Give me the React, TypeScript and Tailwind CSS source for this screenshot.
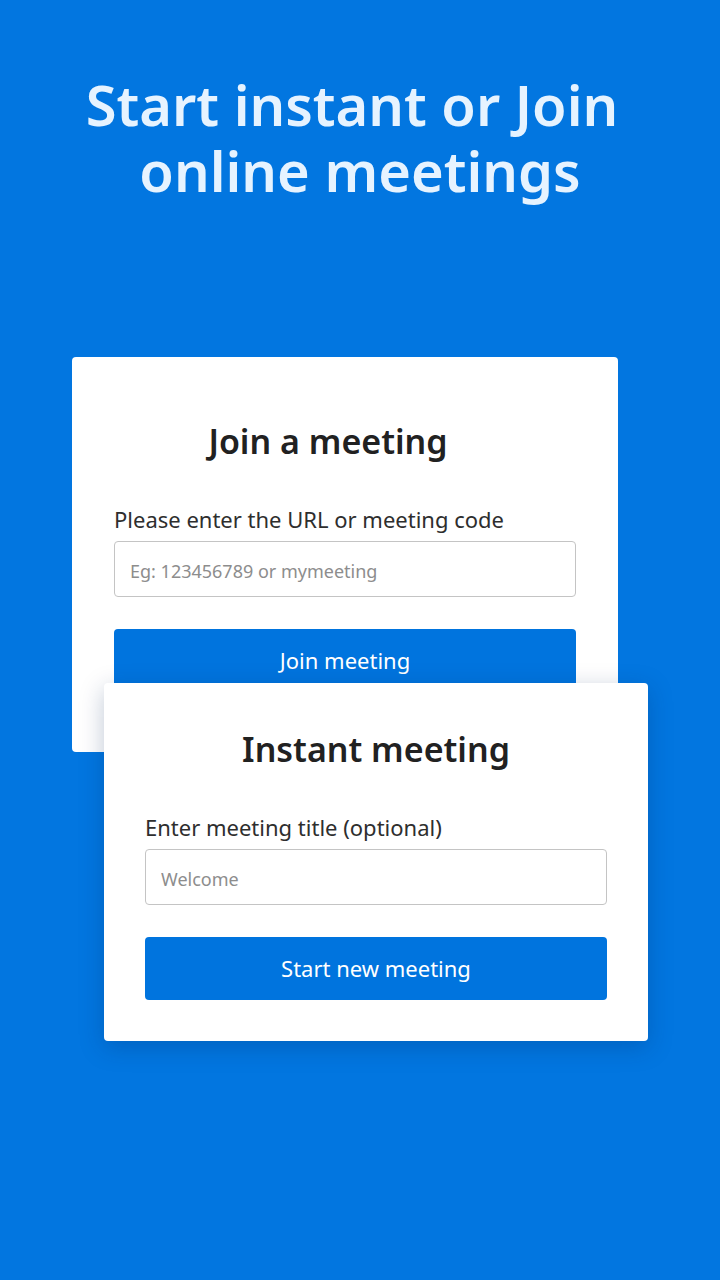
export default function App() {
  return (
    <div
      className="min-h-[1280px] w-[720px] bg-[#0276e0] flex flex-col overflow-hidden"
      style={{ fontFamily: '"Noto Sans", "Open Sans", sans-serif' }}
    >
      <h1 className="mt-[71px] text-center text-[56px] leading-[66px] font-semibold text-[#e6f3ff]">
        <span className="block pr-[16px]">Start instant or Join</span>
        <span className="block">online meetings</span>
      </h1>

      <div className="mt-[154px] ml-[72px] w-[546px] h-[395px] bg-white rounded-[4px] px-[42px] pt-[62px]">
        <h2 className="pr-[34px] text-center text-[34px] leading-[44px] font-semibold text-[#212121]">Join a meeting</h2>
        <p className="mt-[41px] text-[22px] leading-[30px] text-[#2e2e2e]">Please enter the URL or meeting code</p>
        <input
          className="mt-[7px] w-full h-[56px] border border-[#c4c4c4] rounded-[4px] px-[15px] pt-[4px] text-[18px] text-[#333] placeholder:text-[#8d8d8d] outline-none"
          placeholder="Eg: 123456789 or mymeeting"
        />
        <button className="mt-[32px] w-full h-[63px] bg-[#0074de] rounded-[4px] text-white text-[22px]">Join meeting</button>
      </div>

      <div className="relative mt-[-69px] ml-[104px] w-[544px] h-[358px] bg-white rounded-[4px] px-[41px] pt-[44px] shadow-[0_6px_24px_rgba(0,40,90,0.25)]">
        <h2 className="text-center text-[34px] leading-[44px] font-semibold text-[#212121]">Instant meeting</h2>
        <p className="mt-[41px] text-[22px] leading-[30px] text-[#2e2e2e]">Enter meeting title (optional)</p>
        <input
          className="mt-[7px] w-full h-[56px] border border-[#c4c4c4] rounded-[4px] px-[15px] pt-[4px] text-[18px] text-[#333] placeholder:text-[#8d8d8d] outline-none"
          placeholder="Welcome"
        />
        <button className="mt-[32px] w-full h-[63px] bg-[#0074de] rounded-[4px] text-white text-[22px]">Start new meeting</button>
      </div>
    </div>
  );
}
